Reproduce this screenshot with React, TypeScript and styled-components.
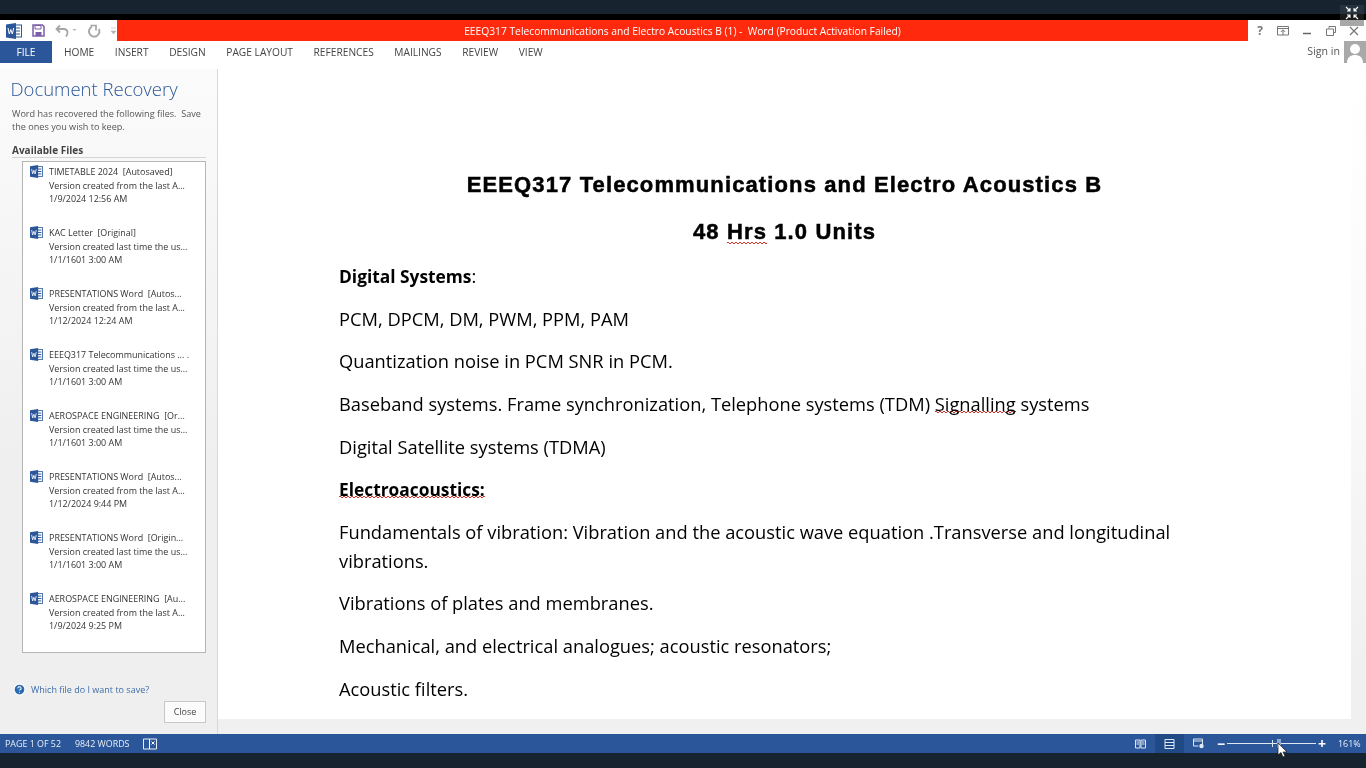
import React from 'react'
import styled, { createGlobalStyle } from 'styled-components'
import { HelpCircle } from 'lucide-react'

const files = [
  { name: 'TIMETABLE 2024  [Autosaved]', info: 'Version created from the last A...', date: '1/9/2024 12:56 AM' },
  { name: 'KAC Letter  [Original]', info: 'Version created last time the us...', date: '1/1/1601 3:00 AM' },
  { name: 'PRESENTATIONS Word  [Autos...', info: 'Version created from the last A...', date: '1/12/2024 12:24 AM' },
  { name: 'EEEQ317 Telecommunications ... .', info: 'Version created last time the us...', date: '1/1/1601 3:00 AM' },
  { name: 'AEROSPACE ENGINEERING  [Or...', info: 'Version created last time the us...', date: '1/1/1601 3:00 AM' },
  { name: 'PRESENTATIONS Word  [Autos...', info: 'Version created from the last A...', date: '1/12/2024 9:44 PM' },
  { name: 'PRESENTATIONS Word  [Origin...', info: 'Version created last time the us...', date: '1/1/1601 3:00 AM' },
  { name: 'AEROSPACE ENGINEERING  [Au...', info: 'Version created from the last A...', date: '1/9/2024 9:25 PM' },
]

const tabs = ['HOME', 'INSERT', 'DESIGN', 'PAGE LAYOUT', 'REFERENCES', 'MAILINGS', 'REVIEW', 'VIEW']

const WordIcon = ({ size = 13 }: { size?: number }) => (
  <svg width={size} height={size} viewBox="0 0 16 16">
    <rect x="5" y="2" width="10.5" height="12" fill="#fff" stroke="#2b579a" />
    <path d="M9 5h5M9 8h5M9 11h5" stroke="#2b579a" strokeWidth="1.2" />
    <path d="M0 1.5 10 0v16L0 14.500z" fill="#2b579a" />
    <path d="M2 5l1.300 6 1.500-4.500L6.300 11 7.700 5" fill="none" stroke="#fff" strokeWidth="1" />
  </svg>
)

export default function App() {
  return (
    <>
      <GlobalStyle />
      <Screen>
        <TopStrip />
        <BlackStrip />
        <TitleRow>
          <QuickAccess>
            <WordIcon size={16} />
            <svg width="13" height="13" viewBox="0 0 13 13">
              <path d="M1 1h9.500L12 2.500V12H1z" fill="none" stroke="#7b5ea8" strokeWidth="1.500" />
              <path d="M3 1.500h6v3.500H3z" fill="none" stroke="#7b5ea8" />
              <path d="M3.500 8h6v4h-6z" fill="#7b5ea8" />
            </svg>
            <svg width="22" height="14" viewBox="0 0 22 14">
              <path d="M5 1.500 1.500 5 5 8.500M2 5h6.500c2.800 0 4 1.700 4 3.700 0 1.600-.6 2.800-1.700 3.800" fill="none" stroke="#a6a6a6" strokeWidth="1.800" />
              <path d="M17.500 5h4L19.500 7z" fill="#b5b5b5" />
            </svg>
            <svg width="14" height="14" viewBox="0 0 14 14">
              <path d="M5 2.700A5.200 5.200 0 1 0 11.800 5" fill="none" stroke="#a6a6a6" strokeWidth="1.900" />
              <path d="M3.500 1.500H9v5" fill="none" stroke="#a6a6a6" strokeWidth="1.700" />
            </svg>
            <svg width="5" height="8" viewBox="0 0 5 8">
              <path d="M0 1h5M0 4h5l-2.500 3z" fill="#b5b5b5" stroke="#b5b5b5" strokeWidth=".6" />
            </svg>
          </QuickAccess>
          <RedTitle>EEEQ317 Telecommunications and Electro Acoustics B (1) -  Word (Product Activation Failed)</RedTitle>
          <WindowButtons>
            <HelpMark>?</HelpMark>
            <svg width="12" height="10" viewBox="0 0 12 10">
              <path d="M.5.500h11v8.500H.5zM.5 2.500h11M6 9V4M3.800 6 6 3.800 8.200 6" fill="none" stroke="#777" />
            </svg>
            <svg width="10" height="10" viewBox="0 0 10 10"><path d="M1 7.500h8" stroke="#666" strokeWidth="1.500" /></svg>
            <svg width="10" height="10" viewBox="0 0 10 10">
              <path d="M3 2.500V.5h6.500v6H7.500M.5 3h7v6.500h-7z" fill="none" stroke="#777" />
            </svg>
            <svg width="10" height="10" viewBox="0 0 10 10"><path d="M1 1l8 8M9 1 1 9" stroke="#777" strokeWidth="1.200" /></svg>
          </WindowButtons>
        </TitleRow>
        <Ribbon>
          <TabRow>
            <FileTab>FILE</FileTab>
            <Tabs>
              {tabs.map((tab) => (
                <Tab key={tab}>{tab}</Tab>
              ))}
            </Tabs>
          </TabRow>
          <SignIn>
            <span>Sign in</span>
            <Avatar>
              <svg width="22" height="22" viewBox="0 0 22 22">
                <circle cx="11" cy="8" r="5" fill="#fff" />
                <path d="M3 22c0-6 4-8 8-8s8 2 8 8z" fill="#fff" />
              </svg>
            </Avatar>
          </SignIn>
        </Ribbon>
        <Main>
          <RecoveryPanel>
            <PanelTitle>Document Recovery</PanelTitle>
            <PanelIntro>Word has recovered the following files.  Save the ones you wish to keep.</PanelIntro>
            <FilesHeading>Available Files</FilesHeading>
            <FileList>
              {files.map((file, i) => (
                <FileItem key={i}>
                  <WordIcon />
                  <FileText>
                    <div>{file.name}</div>
                    <div>{file.info}</div>
                    <div>{file.date}</div>
                  </FileText>
                </FileItem>
              ))}
            </FileList>
            <HelpLink>
              <HelpCircle size={13} color="#fff" fill="#2b6cb0" strokeWidth={2} />
              <span>Which file do I want to save?</span>
            </HelpLink>
            <CloseRow>
              <CloseButton>Close</CloseButton>
            </CloseRow>
          </RecoveryPanel>
          <DocArea>
            <Page>
              <DocTitle>EEEQ317 Telecommunications and Electro Acoustics B</DocTitle>
              <DocTitle>48 <Spell $lift={1}>Hrs</Spell> 1.0 Units</DocTitle>
              <Para><b>Digital Systems</b>:</Para>
              <Para>PCM, DPCM, DM, PWM, PPM, PAM</Para>
              <Para>Quantization noise in PCM SNR in PCM.</Para>
              <Para>Baseband systems. Frame synchronization, Telephone systems (TDM) <Spell $lift={4}>Signalling</Spell> systems</Para>
              <Para>Digital Satellite systems (TDMA)</Para>
              <Para><b><Spell $lift={4}>Electroacoustics:</Spell></b></Para>
              <Para>Fundamentals of vibration: Vibration and the acoustic wave equation .Transverse and longitudinal vibrations.</Para>
              <Para>Vibrations of plates and membranes.</Para>
              <Para>Mechanical, and electrical analogues; acoustic resonators;</Para>
              <Para>Acoustic filters.</Para>
            </Page>
          </DocArea>
        </Main>
        <StatusBar>
          <StatusLeft>
            <span>PAGE 1 OF 52</span>
            <span>9842 WORDS</span>
            <svg width="14" height="12" viewBox="0 0 14 12">
              <path d="M.5 1h6v10h-6zM6.500 1h7v10h-7z" fill="none" stroke="#fff" strokeWidth=".9" />
              <path d="M8.500 3.500l3 3M11.500 3.500l-3 3" stroke="#fff" />
            </svg>
          </StatusLeft>
          <StatusRight>
            <ViewButton>
              <svg width="11" height="10" viewBox="0 0 11 10">
                <path d="M.5 1h4.500v8H.5zM6 1h4.500v8H6zM1.500 3h2.500M1.500 5h2.500M7 3h2.500M7 5h2.500" fill="none" stroke="#dfe7f3" />
              </svg>
            </ViewButton>
            <ViewButton $active>
              <svg width="11" height="10" viewBox="0 0 11 10">
                <path d="M1 .5h9v9H1zM1 3.500h9M1 6.500h9" fill="none" stroke="#dfe7f3" />
              </svg>
            </ViewButton>
            <ViewButton>
              <svg width="12" height="11" viewBox="0 0 12 11">
                <path d="M.5 1h9v5.500M.5 1v7h5M.5 3h9" fill="none" stroke="#dfe7f3" />
                <circle cx="8.500" cy="8" r="2.200" fill="#dfe7f3" />
              </svg>
            </ViewButton>
            <ZoomControl>
              <ZoomSign>−</ZoomSign>
              <ZoomTrack>
                <ZoomMark />
                <ZoomThumb />
              </ZoomTrack>
              <ZoomSign>+</ZoomSign>
            </ZoomControl>
            <ZoomValue>161%</ZoomValue>
          </StatusRight>
          <Cursor width="11" height="15" viewBox="0 0 11 15">
            <path d="M1 0v12l3-2.500L6 14l2-1-2-4h4z" fill="#fff" stroke="#111" strokeWidth=".7" />
          </Cursor>
        </StatusBar>
        <BottomStrip />
        <FullscreenToggle>
          <svg width="14" height="14" viewBox="0 0 14 14">
            <path d="M1 1l4 4M5 2v3H2M13 1 9 5M9 2v3h3M1 13l4-4M5 12V9H2M13 13 9 9M9 12V9h3" fill="none" stroke="#fff" strokeWidth="1.100" />
          </svg>
        </FullscreenToggle>
      </Screen>
    </>
  )
}

const GlobalStyle = createGlobalStyle`
  html, body {
    margin: 0;
    padding: 0;
    background: #17232f;
    overflow: hidden;
  }
`

const Screen = styled.div`
  position: relative;
  width: 1366px;
  height: 768px;
  display: flex;
  flex-direction: column;
  font-family: "Open Sans", "Noto Sans", sans-serif;
  overflow: hidden;
  background: #fff;
  filter: blur(0.3px);
`

/* video player frame */
const TopStrip = styled.div`
  height: 14px;
  background: #17232f;
`

const BlackStrip = styled.div`
  height: 6px;
  background: #000;
`

const BottomStrip = styled.div`
  height: 15px;
  background: #17232f;
`

const FullscreenToggle = styled.div`
  position: absolute;
  top: 5px;
  right: 2px;
  width: 24px;
  height: 21px;
  box-sizing: border-box;
  padding-bottom: 5px;
  display: flex;
  align-items: center;
  justify-content: center;
  background: linear-gradient(to bottom, #26323e 0 9px, #1a1a1a 9px 15px, #a8a8a8 15px);
`

/* title bar */
const TitleRow = styled.div`
  height: 21px;
  display: flex;
  background: #fff;
`

const QuickAccess = styled.div`
  width: 117px;
  box-sizing: border-box;
  padding-left: 6px;
  display: flex;
  align-items: center;
  gap: 10px;
`

const RedTitle = styled.div`
  width: 1131px;
  background: #ff2a0d;
  color: #fff;
  font-size: 10.250px;
  line-height: 22px;
  text-align: center;
  white-space: pre;
`

const WindowButtons = styled.div`
  flex: 1;
  display: flex;
  align-items: center;
  justify-content: flex-end;
  gap: 13.500px;
  padding-right: 7px;
`

const HelpMark = styled.span`
  font-size: 12px;
  font-weight: 700;
  color: #777;
`

/* ribbon tabs */
const Ribbon = styled.div`
  height: 28px;
  display: flex;
  justify-content: space-between;
  align-items: flex-start;
  background: #fff;
`

const TabRow = styled.div`
  display: flex;
`

const FileTab = styled.div`
  width: 52px;
  height: 22px;
  background: #2b579a;
  color: #fff;
  font-size: 10.200px;
  line-height: 22px;
  text-align: center;
`

const Tabs = styled.div`
  display: flex;
  gap: 20.600px;
  padding-left: 12px;
`

const Tab = styled.div`
  font-size: 10.200px;
  line-height: 22px;
  color: #444;
`

const SignIn = styled.div`
  display: flex;
  align-items: flex-start;
  gap: 4px;
  font-size: 10.600px;
  line-height: 21px;
  color: #555;
`

const Avatar = styled.div`
  width: 22px;
  height: 22px;
  background: #a9a9a9;
  overflow: hidden;
`

/* main */
const Main = styled.div`
  flex: 1;
  min-height: 0;
  display: flex;
  background: linear-gradient(to bottom, #fff, #fbfbfb 40%, #f0f0f1 90%);
`

const RecoveryPanel = styled.aside`
  width: 218px;
  box-sizing: border-box;
  flex-shrink: 0;
  padding: 8px 11px 0 11px;
  display: flex;
  flex-direction: column;
  border-right: 1px solid #d8d8d8;
  background: linear-gradient(to bottom, #fbfbfb, #efeff0 60%);
`

const PanelTitle = styled.h2`
  margin: 0 0 0 -0.5px;
  font-size: 18.500px;
  font-weight: 300;
  line-height: 24px;
  color: #2b579a;
  white-space: nowrap;
`

const PanelIntro = styled.p`
  margin: 7px 0 0 1px;
  width: 195px;
  font-size: 9.100px;
  line-height: 12.500px;
  color: #555;
  white-space: pre-wrap;
`

const FilesHeading = styled.div`
  margin: 11px 0 0 1px;
  font-size: 10px;
  font-weight: 700;
  line-height: 13px;
  color: #444;
  border-bottom: 1px solid #d4d4d4;
  width: 194px;
`

const FileList = styled.div`
  margin: 3px 0 0 11px;
  width: 184px;
  height: 492px;
  box-sizing: border-box;
  border: 1px solid #b5b5b5;
  background: #fff;
  padding: 3px 0 0 7px;
`

const FileItem = styled.div`
  height: 61px;
  display: flex;
  gap: 6px;
`

const FileText = styled.div`
  font-size: 8.950px;
  line-height: 13.500px;
  color: #333;
  white-space: pre;
`

const HelpLink = styled.div`
  margin: 30px 0 0 2px;
  display: flex;
  align-items: center;
  gap: 5px;
  font-size: 9px;
  color: #3d6ea8;
`

const CloseRow = styled.div`
  display: flex;
  justify-content: flex-end;
  margin-top: 5px;
`

const CloseButton = styled.div`
  width: 42px;
  height: 22px;
  box-sizing: border-box;
  border: 1px solid #c8c8c8;
  background: #fbfbfb;
  font-size: 9px;
  line-height: 20px;
  text-align: center;
  color: #444;
`

/* document */
const DocArea = styled.main`
  flex: 1;
  height: 650px;
  overflow: hidden;
  margin-right: 15px;
  background: #fff;
`

const Page = styled.div`
  width: 891px;
  padding: 102px 0 0 121px;
  color: #000;
  font-size: 18.300px;
  line-height: 28.500px;
`

const DocTitle = styled.h1`
  margin: 0 0 18.500px;
  font-family: "Liberation Sans", Arial, sans-serif;
  font-size: 22px;
  font-weight: 700;
  line-height: 28px;
  letter-spacing: 1.120px;
  -webkit-text-stroke: 0.5px #000;
  text-align: center;

  & + p {
    margin-top: -2px;
  }
`

const Para = styled.p`
  margin: 0 0 14.200px;

  b {
    font-size: 17.350px;
  }
`

const Spell = styled.span<{ $lift: number }>`
  background-image:
    repeating-linear-gradient(90deg, #d9302a 0 2px, transparent 2px 4px),
    repeating-linear-gradient(90deg, transparent 0 2px, #d9302a 2px 4px);
  background-repeat: no-repeat;
  background-size: 100% 1px;
  background-position:
    0 calc(100% - ${(p) => p.$lift}px),
    0 calc(100% - ${(p) => p.$lift - 1}px);
`

/* status bar */
const StatusBar = styled.footer`
  position: relative;
  height: 19px;
  background: #2b579a;
  color: #e9eef6;
  display: flex;
  justify-content: space-between;
  align-items: stretch;
  font-size: 8.900px;
`

const StatusLeft = styled.div`
  display: flex;
  align-items: center;
  gap: 14px;
  padding-left: 5px;
`

const StatusRight = styled.div`
  display: flex;
  align-items: center;
`

const ViewButton = styled.div<{ $active?: boolean }>`
  width: 29px;
  height: 19px;
  display: flex;
  align-items: center;
  justify-content: center;
  background: ${(p) => (p.$active ? '#204a86' : 'transparent')};
`

const ZoomControl = styled.div`
  display: flex;
  align-items: center;
  gap: 1px;
  margin-left: 3px;
`

const ZoomSign = styled.span`
  font-size: 14px;
  font-weight: 700;
  line-height: 19px;
  color: #fff;
  width: 10px;
  text-align: center;
`

const ZoomTrack = styled.div`
  position: relative;
  width: 89px;
  height: 1px;
  background: #dfe7f3;
`

const ZoomMark = styled.div`
  position: absolute;
  left: 45px;
  top: -3px;
  width: 1px;
  height: 7px;
  background: #dfe7f3;
`

const ZoomThumb = styled.div`
  position: absolute;
  left: 50px;
  top: -4px;
  width: 4px;
  height: 9px;
  background: #8da9d0;
`

const ZoomValue = styled.span`
  width: 39px;
  padding-left: 11px;
  box-sizing: border-box;
  white-space: nowrap;
`

const Cursor = styled.svg`
  position: absolute;
  left: 1277px;
  top: 9px;
`
